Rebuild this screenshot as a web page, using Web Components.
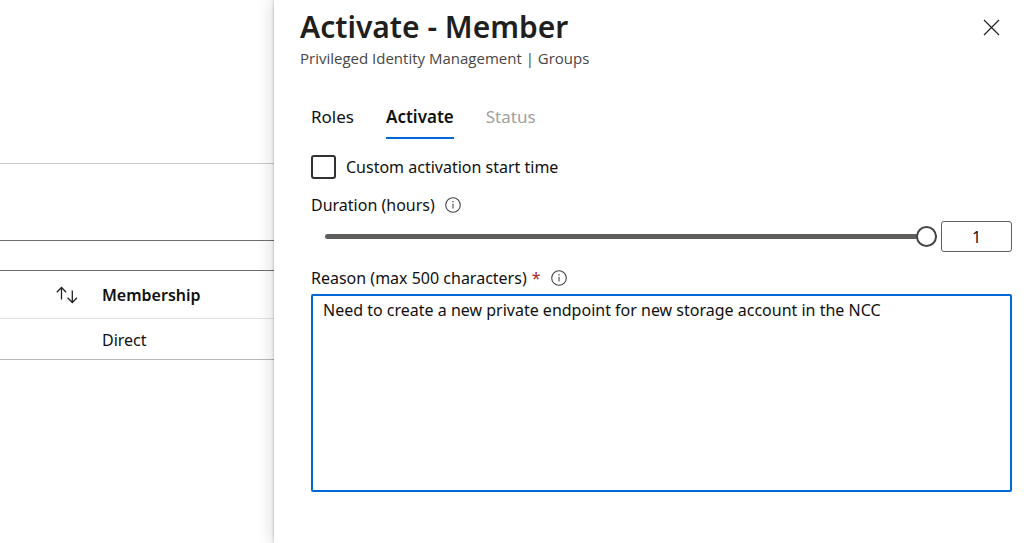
<!DOCTYPE html>
<html lang="en">
<head>
<meta charset="utf-8">
<title>Activate - Member</title>
<style>
  html, body { margin: 0; height: 100%; background: #fff; }
  body { font: 16px/24px "Noto Sans", "Open Sans", sans-serif; color: #111; overflow: hidden; }
</style>
</head>
<body>
<pim-page>
  <group-list slot="list"></group-list>
  <blade-panel heading="Activate - Member" subheading="Privileged Identity Management | Groups">
    <tab-bar></tab-bar>
    <activate-form></activate-form>
  </blade-panel>
</pim-page>

<script>
function define(name, html, setup) {
  const template = document.createElement('template');
  template.innerHTML = html;
  customElements.define(name, class extends HTMLElement {
    constructor() {
      super();
      this.attachShadow({ mode: 'open' }).append(template.content.cloneNode(true));
    }
    connectedCallback() { if (setup) setup(this, this.shadowRoot); }
  });
}

define('pim-page', `
  <style>
    :host { display: grid; grid-template-columns: minmax(0, 274px) minmax(0, 1fr); min-height: 100vh; }
  </style>
  <slot name="list"></slot>
  <slot></slot>`);

define('sort-icon', `
  <style>:host { display: block; } svg { display: block; }</style>
  <svg width="22" height="18" viewBox="0 0 22 18" fill="none" stroke="#222" stroke-width="1.3" aria-hidden="true">
    <path d="M5.5 13.5V1.5M0.8 6.2L5.5 1.5L10.2 6.2M16.3 4.5V16.5M11.6 11.8L16.3 16.5L21 11.8"/>
  </svg>`);

define('group-list', `
  <style>
    :host { display: block; min-width: 0; }
    .banner { height: 163px; border-bottom: 1px solid #c8c8c8; }
    .filters { height: 76px; border-bottom: 1px solid #6e6e6e; }
    .gap { height: 29px; }
    table { width: 100%; border-collapse: separate; border-spacing: 0; table-layout: fixed; border-top: 1px solid #6e6e6e; }
    col.sort { width: 102px; }
    th, td { padding: 0; text-align: left; box-sizing: border-box; }
    th { height: 48px; border-bottom: 1px solid #e2e2e2; font-weight: 600; }
    td { height: 41px; padding-top: 2px; border-bottom: 1px solid #b8b8b8; }
    button { display: block; margin-left: 56px; padding: 0; border: 0; background: none; }
  </style>
  <div class="banner"></div>
  <div class="filters"></div>
  <div class="gap"></div>
  <table>
    <colgroup><col class="sort"><col></colgroup>
    <thead><tr><th><button type="button" aria-label="Sort"><sort-icon></sort-icon></button></th><th scope="col">Membership</th></tr></thead>
    <tbody><tr><td></td><td>Direct</td></tr></tbody>
  </table>`);

define('blade-panel', `
  <style>
    :host { display: block; position: relative; min-width: 0; padding: 8px 12px 24px 26px; box-sizing: border-box;
      background: #fff; box-shadow: 0 0 3px rgba(0,0,0,.25), -2px 0 16px rgba(0,0,0,.14); }
    header { display: flex; justify-content: space-between; align-items: flex-start; }
    h1 { margin: 0; font-size: 30px; line-height: 38px; font-weight: 600; color: #201f1e; }
    p { margin: 0; font: 15px/24px "Open Sans", "Noto Sans", sans-serif; color: #484644; }
    button { margin: 7px 8px 0 0; padding: 4px; border: 0; background: none; }
    svg { display: block; }
    .body { padding: 35px 0 0 11px; }
  </style>
  <header>
    <div><h1></h1><p></p></div>
    <button type="button" aria-label="Close">
      <svg width="17" height="17" viewBox="0 0 17 17" fill="none" stroke="#222" stroke-width="1.2"><path d="M1 1L16 16M16 1L1 16"/></svg>
    </button>
  </header>
  <div class="body"><slot></slot></div>`, (host, root) => {
    root.querySelector('h1').textContent = host.getAttribute('heading');
    root.querySelector('p').textContent = host.getAttribute('subheading');
  });

define('tab-bar', `
  <style>
    :host { display: block; font-size: 17px; }
    div { display: flex; gap: 32px; }
    button { padding: 0 0 8px; border: 0; border-bottom: 2px solid transparent; background: none; font: inherit; color: inherit; }
    button[aria-selected=true] { font-weight: 600; border-color: #0067d6; }
    button:disabled { color: #a19f9d; }
  </style>
  <div role="tablist">
    <button type="button" role="tab" aria-selected="false">Roles</button>
    <button type="button" role="tab" aria-selected="true">Activate</button>
    <button type="button" role="tab" aria-selected="false" disabled>Status</button>
  </div>`);

define('info-icon', `
  <style>:host { display: block; } svg { display: block; }</style>
  <svg width="16" height="16" viewBox="0 0 16 16" fill="none" stroke="#444" aria-hidden="true">
    <circle cx="8" cy="8" r="7.3" stroke-width="1.1"/>
    <path d="M8 6.8V11.6" stroke-width="1.1"/><circle cx="8" cy="4.7" r=".75" fill="#444" stroke="none"/>
  </svg>`);

define('activate-form', `
  <style>
    :host { display: block; padding-top: 16px; }
    .check { display: flex; align-items: center; gap: 10px; }
    .check input { appearance: none; box-sizing: border-box; width: 25px; height: 24px; margin: 0; border: 2px solid #323130; border-radius: 3px; background: #fff; }
    .label { display: flex; align-items: center; }
    .label info-icon { margin-left: 10px; }
    .duration { margin-top: 14px; }
    .required { color: #a4262c; margin-left: 5px; }
    .range { display: flex; align-items: center; gap: 4px; margin: 4px 0 14px 14px; }
    input[type=range] { appearance: none; flex: 1; min-width: 0; height: 22px; margin: 0; background: none; }
    input[type=range]::-webkit-slider-runnable-track { height: 5px; border-radius: 3px; background: #605e5c; }
    input[type=range]::-webkit-slider-thumb { appearance: none; box-sizing: border-box; width: 21px; height: 21px; margin-top: -8px; border: 2px solid #484644; border-radius: 50%; background: #fff; }
    .hours { box-sizing: border-box; width: 71px; height: 31px; padding: 0; border: 1px solid #605e5c; border-radius: 3px; font: inherit; color: inherit; text-align: center; }
    textarea { display: block; box-sizing: border-box; width: 100%; height: 198px; margin-top: 4px; padding: 2px 10px; border: 2px solid #0067d6; border-radius: 2px; outline: 0; resize: none; background: #fff; font: inherit; color: inherit; }
  </style>
  <div class="check"><input type="checkbox" id="custom"><label for="custom">Custom activation start time</label></div>
  <div class="label duration"><label for="duration">Duration (hours)</label><info-icon></info-icon></div>
  <div class="range">
    <input type="range" id="duration" min="0" max="1" step="0.5" value="1">
    <input type="text" class="hours" value="1" aria-label="Duration in hours">
  </div>
  <div class="label"><label for="reason">Reason (max 500 characters)</label><span class="required">*</span><info-icon></info-icon></div>
  <textarea id="reason" required>Need to create a new private endpoint for new storage account in the NCC</textarea>`);
</script>
</body>
</html>
